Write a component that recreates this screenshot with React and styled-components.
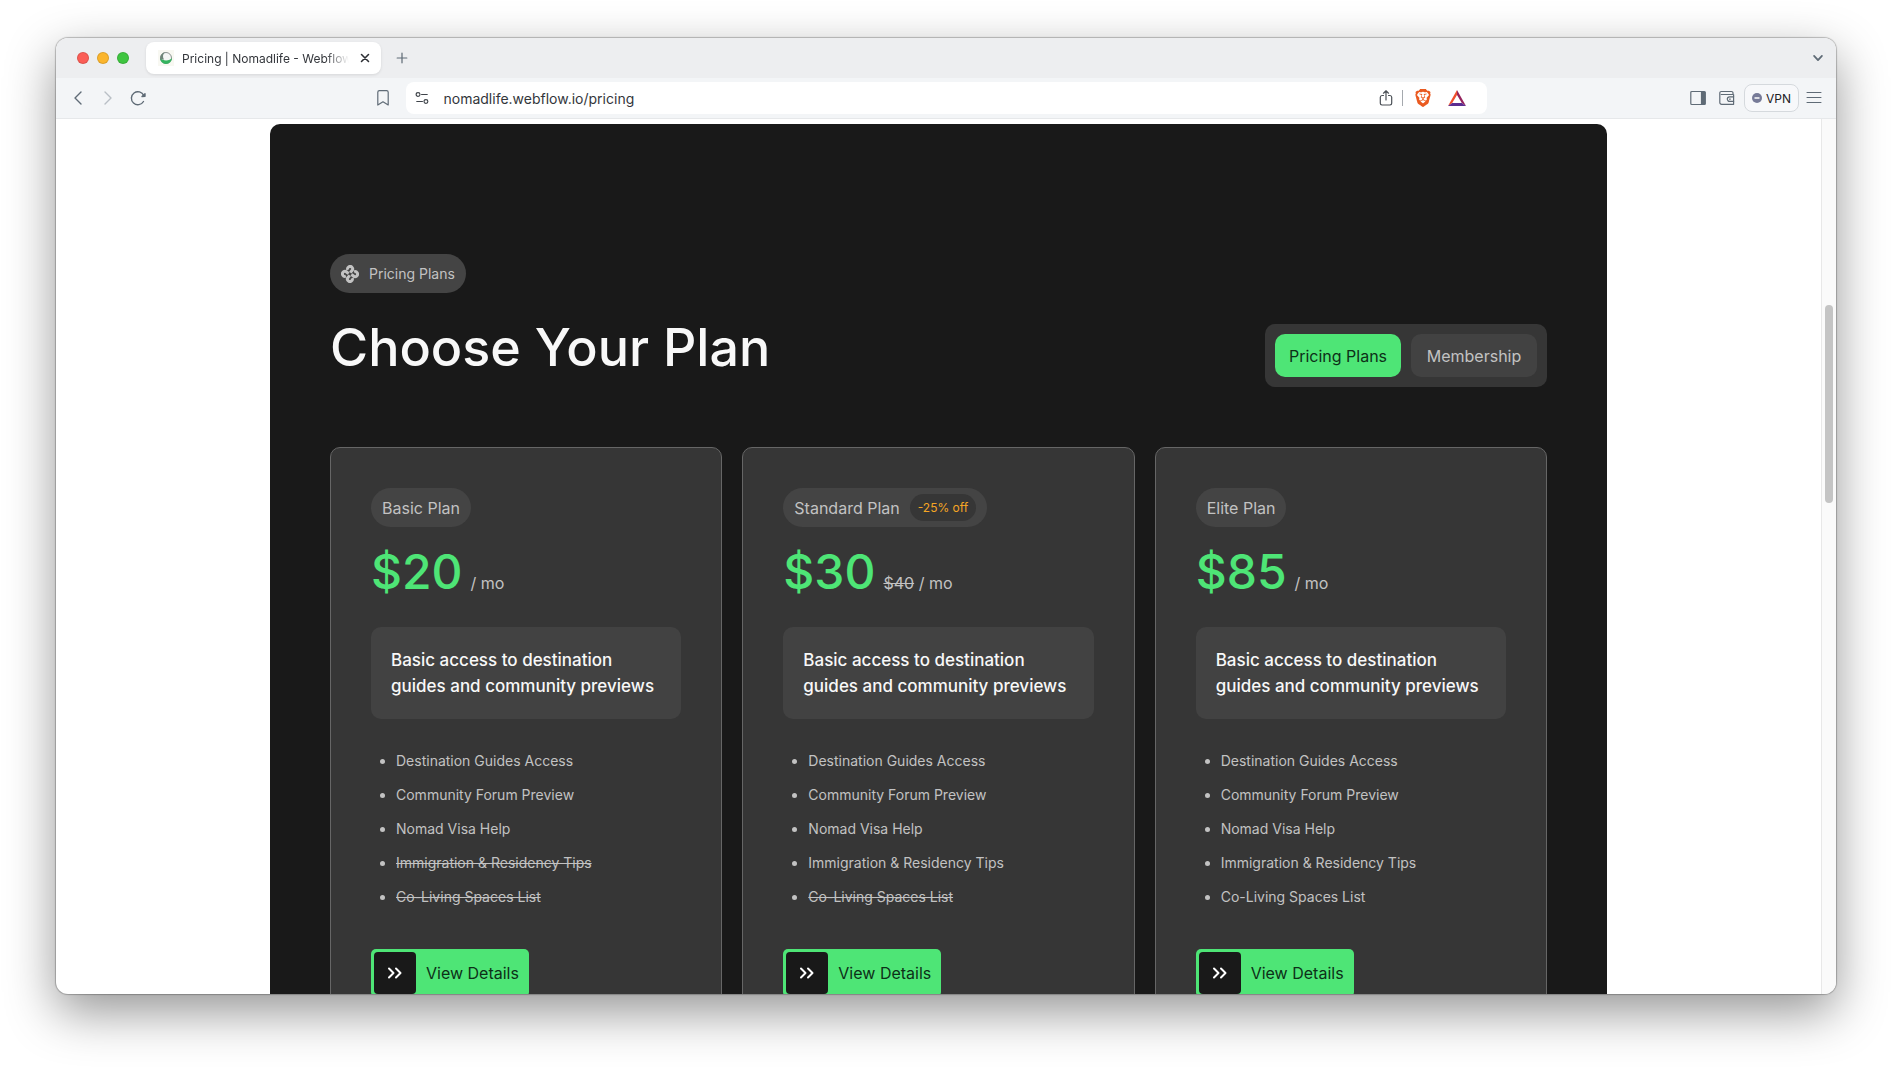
import React, { useState } from 'react';
import styled, { createGlobalStyle } from 'styled-components';
import { SiBrave } from 'react-icons/si';

const GlobalStyle = createGlobalStyle`
  * {
    box-sizing: border-box;
  }

  body {
    margin: 0;
    background: white;
    font-family: Inter, 'Liberation Sans', sans-serif;
  }

  button,
  input {
    font-family: inherit;
  }
`;

const StyledDesktop = styled.div`
  height: 100vh;
  padding: 38px 56px 74px;
  overflow: hidden;
`;

const StyledWindow = styled.div`
  display: flex;
  flex-direction: column;
  height: 100%;
  overflow: hidden;
  border-radius: 12px;
  background: white;
  box-shadow: 0 0 1px 1px rgba(0, 0, 0, 0.24), 0 18px 50px rgba(0, 0, 0, 0.42);
`;

const StyledTabBar = styled.div`
  display: flex;
  flex: none;
  align-items: center;
  height: 40px;
  padding: 0 10px 0 21px;
  background: #edeef0;
`;

const StyledLights = styled.div`
  display: flex;
  gap: 8px;
  margin-right: 17px;
`;

const StyledLight = styled.span`
  width: 12px;
  height: 12px;
  border: 1px solid rgba(0, 0, 0, 0.12);
  border-radius: 50%;
  background: ${({ $color }) => $color};
`;

const StyledTab = styled.div`
  display: flex;
  align-items: center;
  gap: 8px;
  width: 235px;
  height: 32px;
  padding: 0 8px 0 12px;
  border-radius: 8px;
  background: white;
  box-shadow: 0 1px 3px rgba(0, 0, 0, 0.1);
`;

const StyledTabTitle = styled.span`
  flex: 1;
  overflow: hidden;
  font-size: 12px;
  white-space: nowrap;
  color: #33363b;
  mask-image: linear-gradient(to right, black 86%, transparent);
`;

const StyledIconButton = styled.button`
  display: flex;
  flex: none;
  align-items: center;
  justify-content: center;
  width: ${({ $size }) => $size || 20}px;
  height: ${({ $size }) => $size || 20}px;
  padding: 0;
  border: none;
  background: none;
  color: ${({ $color }) => $color || '#5f6b76'};
`;

const StyledSpacer = styled.div`
  flex: 1;
`;

const StyledToolbar = styled.div`
  display: flex;
  flex: none;
  align-items: center;
  justify-content: space-between;
  height: 41px;
  padding: 0 12px;
  border-bottom: 1px solid #e6e8ea;
  background: #f3f5f7;
`;

const StyledToolGroup = styled.div`
  display: flex;
  align-items: center;
  gap: ${({ $gap }) => $gap}px;
`;

const StyledNav = styled(StyledToolGroup)`
  flex: 1 0 0;
  padding-right: 13px;
`;

const StyledAddress = styled.div`
  display: flex;
  align-items: center;
  flex: 0 1 1081px;
  height: 32px;
  padding: 0 20px 0 6px;
  border-radius: 8px;
  background: white;
`;

const StyledUrl = styled.input`
  flex: 1;
  min-width: 0;
  margin-left: 12px;
  padding: 0;
  border: none;
  outline: none;
  background: none;
  font-size: 14px;
  color: #33363b;
`;

const StyledDivider = styled.span`
  width: 1px;
  height: 16px;
  margin: 0 10px 0 6px;
  background: #a5a9ae;
`;

const StyledActions = styled(StyledToolGroup)`
  flex: 1 0 0;
  justify-content: flex-end;
  padding-left: 13px;
`;

const StyledVpn = styled.button`
  display: flex;
  align-items: center;
  gap: 4px;
  height: 28px;
  padding: 0 7px;
  border: 1px solid #d5d9dd;
  border-radius: 8px;
  background: #f7f8fa;
  font-size: 12px;
  color: #1d2125;
`;

const StyledViewport = styled.div`
  display: flex;
  flex: 1;
  min-height: 0;
`;

const StyledPage = styled.main`
  flex: 1;
  min-width: 0;
  overflow: hidden;
  padding-top: 5px;
`;

const StyledTrack = styled.div`
  width: 15px;
  padding: 186px 3px 0;
  border-left: 1px solid #e8e8e8;
  background: #fafafa;
`;

const StyledThumb = styled.div`
  width: 8px;
  height: 198px;
  border-radius: 4px;
  background: #c4c4c4;
`;

const StyledPanel = styled.section`
  max-width: 1337px;
  margin: 0 auto;
  padding: 130px 60px;
  border-radius: 10px;
  background: #191919;
`;

const StyledHeader = styled.header`
  display: flex;
  align-items: flex-end;
  justify-content: space-between;
  margin-bottom: 60px;
`;

const StyledHeading = styled.div`
  display: flex;
  flex-direction: column;
  align-items: flex-start;
  gap: 16px;
`;

const StyledPill = styled.div`
  display: flex;
  align-items: center;
  gap: 10px;
  height: 39px;
  padding: 0 11px;
  border-radius: 20px;
  background: #444;
  font-size: 14px;
  color: #c2c2c2;
`;

const StyledTitle = styled.h1`
  margin: 0;
  font-weight: 500;
  font-size: 52px;
  line-height: 78px;
  color: #f8f8f8;
`;

const StyledSwitch = styled.div`
  display: flex;
  gap: 10px;
  padding: 10px;
  border-radius: 10px;
  background: #363636;
`;

const StyledSwitchButton = styled.button`
  width: 126px;
  height: 43px;
  padding: 0;
  border: none;
  border-radius: 10px;
  background: ${({ $active }) => ($active ? '#4ee576' : '#424242')};
  font-size: 16px;
  color: ${({ $active }) => ($active ? '#0d3018' : '#c2c2c2')};
`;

const StyledCards = styled.div`
  display: grid;
  grid-template-columns: repeat(3, 1fr);
  gap: 20px;
`;

const StyledCard = styled.article`
  display: flex;
  flex-direction: column;
  align-items: flex-start;
  padding: 40px;
  border: 1px solid #666;
  border-radius: 10px;
  background: #363636;
`;

const StyledPlanName = styled.h2`
  margin: 0;
  font-weight: 400;
  font-size: 16px;
`;

const StyledDiscount = styled.span`
  height: 27px;
  padding: 0 8px;
  border-radius: 14px;
  background: #363636;
  font-size: 12px;
  line-height: 27px;
  color: #f5a524;
`;

const StyledPrice = styled.div`
  display: flex;
  align-items: baseline;
  gap: 8px;
  margin: 14px 0 24px;
  line-height: 62px;
`;

const StyledAmount = styled.span`
  font-weight: 500;
  font-size: 48px;
  line-height: 62px;
  color: #4ee576;
`;

const StyledPeriod = styled.span`
  font-size: 16px;
  line-height: 24px;
  color: #c2c2c2;
`;

const StyledSummary = styled.p`
  align-self: stretch;
  margin: 0 0 30px;
  padding: 20px;
  border-radius: 10px;
  background: #424242;
  font-size: 17px;
  line-height: 26px;
  font-weight: 500;
  color: #f8f8f8;
`;

const StyledFeatures = styled.ul`
  display: flex;
  flex-direction: column;
  gap: 10px;
  margin: 0 0 40px;
  padding-left: 25px;
  font-size: 14px;
  line-height: 24px;
  color: #c2c2c2;
`;

const StyledFeature = styled.li`
  text-decoration: ${({ $excluded }) => ($excluded ? 'line-through' : 'none')};
`;

const StyledDetails = styled.a`
  display: flex;
  align-items: center;
  gap: 10px;
  padding: 3px 10px 3px 3px;
  border-radius: 5px;
  background: #4ee576;
  font-size: 16px;
  text-decoration: none;
  color: #0d3018;
`;

const StyledArrow = styled.span`
  display: flex;
  align-items: center;
  justify-content: center;
  width: 42px;
  height: 42px;
  border-radius: 4px;
  background: #191919;
  color: white;
`;

const Icon = ({ size = 16, width = 1.2, children }) => (
  <svg
    width={size}
    height={size}
    viewBox="0 0 16 16"
    fill="none"
    stroke="currentColor"
    strokeWidth={width}
    strokeLinecap="round"
    strokeLinejoin="round"
    aria-hidden="true"
  >
    {children}
  </svg>
);

const FlowerIcon = () => (
  <svg width="18" height="18" viewBox="0 0 18 18" aria-hidden="true">
    {[0, 90, 180, 270].map((angle) => (
      <path
        key={angle}
        d="M6.800 4.900A2.500 2.500 0 1 1 11 5.600L9.300 7.600"
        fill="none"
        stroke="#c2c2c2"
        strokeWidth="3"
        transform={`rotate(${angle} 9 9)`}
      />
    ))}
  </svg>
);

const Favicon = () => (
  <svg width="16" height="16" viewBox="0 0 16 16" aria-hidden="true">
    <rect width="16" height="16" fill="#f8f8f2" />
    <circle cx="8" cy="8" r="5.500" fill="#f4f6f4" stroke="#8c9490" />
    <path d="M2 8a6 6 0 0 0 12 0c-2 3-9 3.500-12 0z" fill="#35b35f" />
    <path d="M2.200 9.500C2 5 4 3 7 2.200 4.500 4.500 4.500 7 6 9.500z" fill="#6f8578" />
  </svg>
);

const BatIcon = () => (
  <svg width="18" height="16" viewBox="0 0 18 16" aria-hidden="true">
    <path d="M9 0v5L4.200 13 0 16z" fill="#f0502d" />
    <path d="M9 0l9 16-4.200-3L9 5z" fill="#94235c" />
    <path d="M0 16l4.200-3h9.600L18 16z" fill="#5b2d91" />
  </svg>
);

const plans = [
  { name: 'Basic Plan', price: '$20', included: 3 },
  {
    name: 'Standard Plan',
    price: '$30',
    oldPrice: '$40',
    discount: '-25% off',
    included: 4,
  },
  { name: 'Elite Plan', price: '$85', included: 5 },
];

const features = [
  'Destination Guides Access',
  'Community Forum Preview',
  'Nomad Visa Help',
  'Immigration & Residency Tips',
  'Co-Living Spaces List',
];

const PlanCard = ({ plan }) => (
  <StyledCard>
    <StyledPill>
      <StyledPlanName>{plan.name}</StyledPlanName>
      {plan.discount && <StyledDiscount>{plan.discount}</StyledDiscount>}
    </StyledPill>
    <StyledPrice>
      <StyledAmount>{plan.price}</StyledAmount>
      <StyledPeriod>
        {plan.oldPrice && <s>{plan.oldPrice}</s>} / mo
      </StyledPeriod>
    </StyledPrice>
    <StyledSummary>
      Basic access to destination guides and community previews
    </StyledSummary>
    <StyledFeatures>
      {features.map((feature, index) => (
        <StyledFeature key={feature} $excluded={index >= plan.included}>
          {feature}
        </StyledFeature>
      ))}
    </StyledFeatures>
    <StyledDetails href="#details">
      <StyledArrow>
        <Icon width={2}>
          <path d="M2 3.500 6.500 8 2 12.500M9 3.500 13.500 8 9 12.500" />
        </Icon>
      </StyledArrow>
      View Details
    </StyledDetails>
  </StyledCard>
);

const BrowserTabs = () => (
  <StyledTabBar>
    <StyledLights>
      <StyledLight $color="#fb5d56" />
      <StyledLight $color="#fbb52d" />
      <StyledLight $color="#3fc540" />
    </StyledLights>
    <StyledTab>
      <Favicon />
      <StyledTabTitle>Pricing | Nomadlife - Webflow</StyledTabTitle>
      <StyledIconButton type="button" aria-label="Close tab" $size={16} $color="#2d3035">
        <Icon size={14} width={1.8}>
          <path d="M4 4l8 8M12 4l-8 8" />
        </Icon>
      </StyledIconButton>
    </StyledTab>
    <StyledIconButton type="button" aria-label="New tab" $size={42}>
      <Icon size={14} width={1.4}>
        <path d="M8 2.500v11M2.500 8h11" />
      </Icon>
    </StyledIconButton>
    <StyledSpacer />
    <StyledIconButton type="button" aria-label="Search tabs" $size={16}>
      <Icon size={14} width={2}>
        <path d="M3.500 5.500 8 10.500l4.500-5" />
      </Icon>
    </StyledIconButton>
  </StyledTabBar>
);

const BrowserToolbar = () => (
  <StyledToolbar>
    <StyledNav $gap={10}>
      <StyledIconButton type="button" aria-label="Back">
        <Icon width={1.4}>
          <path d="M11 2 5 8l6 6" />
        </Icon>
      </StyledIconButton>
      <StyledIconButton type="button" aria-label="Forward" $color="#b9bfc5">
        <Icon width={1.4}>
          <path d="M5 2l6 6-6 6" />
        </Icon>
      </StyledIconButton>
      <StyledIconButton type="button" aria-label="Reload">
        <Icon width={1.4}>
          <path d="M13.500 11.500A6.500 6.500 0 1 1 13.800 5.500" />
          <path d="M12 6.500l3-.2V3.800z" fill="currentColor" />
        </Icon>
      </StyledIconButton>
      <StyledSpacer />
      <StyledIconButton type="button" aria-label="Bookmark">
        <Icon>
          <path d="M2.800 2.200c0-1 .6-1.600 1.600-1.600h7.200c1 0 1.600.6 1.600 1.600V15L8 11.800 2.800 15z" />
        </Icon>
      </StyledIconButton>
    </StyledNav>
    <StyledAddress>
      <StyledIconButton type="button" aria-label="Site settings" $color="#3f444a">
        <Icon size={14} width={1.3}>
          <circle cx="3.500" cy="4" r="2.200" />
          <path d="M7.500 4H14M2 12h6.500" />
          <circle cx="12.500" cy="12" r="2.200" />
        </Icon>
      </StyledIconButton>
      <StyledUrl
        aria-label="Address"
        defaultValue="nomadlife.webflow.io/pricing"
      />
      <StyledIconButton type="button" aria-label="Share" $color="#4a4f55">
        <Icon>
          <path d="M5.500 5.500H4A1.800 1.800 0 0 0 2.300 7.200v6A1.800 1.800 0 0 0 4 15h8a1.800 1.800 0 0 0 1.700-1.800v-6A1.800 1.800 0 0 0 12 5.500h-1.500M8 10V1M5.500 3.200 8 .8l2.500 2.400" />
        </Icon>
      </StyledIconButton>
      <StyledDivider />
      <StyledToolGroup $gap={14}>
        <StyledIconButton type="button" aria-label="Brave Shields" $color="#ea5a20">
          <SiBrave size={18} />
        </StyledIconButton>
        <StyledIconButton type="button" aria-label="Brave Rewards">
          <BatIcon />
        </StyledIconButton>
      </StyledToolGroup>
    </StyledAddress>
    <StyledActions $gap={5}>
      <StyledIconButton type="button" aria-label="Sidebar" $size={24}>
        <Icon>
          <rect x="0.800" y="1.500" width="14.400" height="13" rx="1" />
          <path d="M11.500 2H15v12h-3.500z" fill="currentColor" />
        </Icon>
      </StyledIconButton>
      <StyledIconButton type="button" aria-label="Wallet" $size={24}>
        <Icon>
          <path d="M14 4.500V3a1.500 1.500 0 0 0-1.500-1.500H2.300A1.500 1.500 0 0 0 .8 3v9.500A1.800 1.800 0 0 0 2.600 14.300h12V4.500H2.300" />
          <path d="M14.600 6.800h-4a2.300 2.300 0 0 0 0 4.600h4M10.500 9.100h.8" />
        </Icon>
      </StyledIconButton>
      <StyledVpn type="button">
        <svg width="10" height="10" viewBox="0 0 10 10" aria-hidden="true">
          <circle cx="5" cy="5" r="5" fill="#777b98" />
          <path d="M2.500 5h5" stroke="white" strokeWidth="1.400" />
        </svg>
        VPN
      </StyledVpn>
      <StyledIconButton type="button" aria-label="Menu">
        <Icon width={1}>
          <path d="M1 2.500h14M1 7.500h14M1 12.500h14" />
        </Icon>
      </StyledIconButton>
    </StyledActions>
  </StyledToolbar>
);

const App = () => {
  const [view, setView] = useState('Pricing Plans');

  return (
    <StyledDesktop>
      <GlobalStyle />
      <StyledWindow>
        <BrowserTabs />
        <BrowserToolbar />
        <StyledViewport>
          <StyledPage>
            <StyledPanel>
              <StyledHeader>
                <StyledHeading>
                  <StyledPill>
                    <FlowerIcon />
                    Pricing Plans
                  </StyledPill>
                  <StyledTitle>Choose Your Plan</StyledTitle>
                </StyledHeading>
                <StyledSwitch>
                  {['Pricing Plans', 'Membership'].map((label) => (
                    <StyledSwitchButton
                      key={label}
                      type="button"
                      $active={view === label}
                      onClick={() => setView(label)}
                    >
                      {label}
                    </StyledSwitchButton>
                  ))}
                </StyledSwitch>
              </StyledHeader>
              <StyledCards>
                {plans.map((plan) => (
                  <PlanCard key={plan.name} plan={plan} />
                ))}
              </StyledCards>
            </StyledPanel>
          </StyledPage>
          <StyledTrack>
            <StyledThumb />
          </StyledTrack>
        </StyledViewport>
      </StyledWindow>
    </StyledDesktop>
  );
};

export default App;
